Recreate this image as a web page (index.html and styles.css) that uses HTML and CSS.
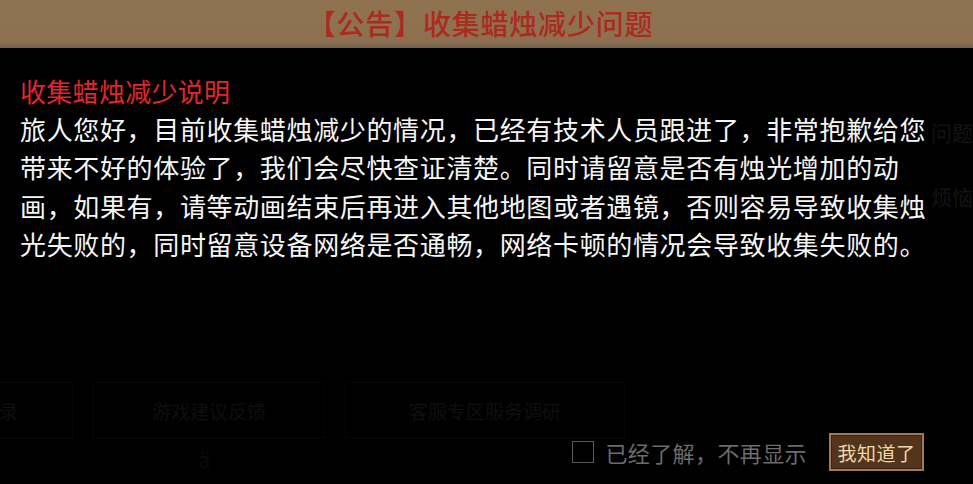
FILE: index.html
```html
<!DOCTYPE html>
<html lang="zh-CN">
<head>
<meta charset="utf-8">
<title>公告</title>
<link rel="stylesheet" href="styles.css">
</head>
<body>
<div class="ghost" aria-hidden="true">
  <div class="ghost-side ghost-side-1">问题</div>
  <div class="ghost-side ghost-side-2">烦恼</div>
  <div class="ghost-row">
    <div class="ghost-box ghost-box-a">录</div>
    <div class="ghost-box ghost-box-b">游戏建议反馈</div>
    <div class="ghost-box ghost-box-c">客服专区服务调研</div>
  </div>
  <div class="ghost-mark">ä</div>
</div>
<div class="page">
  <header class="header">
    <h1 class="title">【公告】收集蜡烛减少问题</h1>
  </header>
  <main class="content">
    <h2 class="subtitle">收集蜡烛减少说明</h2>
    <p class="body-text">旅人您好，目前收集蜡烛减少的情况，已经有技术人员跟进了，非常抱歉给您<br>带来不好的体验了，我们会尽快查证清楚。同时请留意是否有烛光增加的动<br>画，如果有，请等动画结束后再进入其他地图或者遇镜，否则容易导致收集烛<br>光失败的，同时留意设备网络是否通畅，网络卡顿的情况会导致收集失败的。</p>
  </main>
  <footer class="footer">
    <label class="dismiss">
      <span class="checkbox"></span>
      <span class="dismiss-text">已经了解，不再显示</span>
    </label>
    <button class="ok-btn" type="button">我知道了</button>
  </footer>
</div>
</body>
</html>
```
FILE: styles.css
```css
html, body {
  margin: 0;
  padding: 0;
  height: 100%;
}
body {
  background: #000;
  font-family: "Noto Sans CJK SC", "Noto Sans", sans-serif;
  color: #fff;
  overflow: hidden;
  position: relative;
}
.page {
  position: relative;
  z-index: 1;
  height: 484px;
  display: flex;
  flex-direction: column;
}
.header {
  height: 48px;
  flex: 0 0 48px;
  background: linear-gradient(#8f7351, #8c7050 88%, #6f604f);
  display: flex;
  align-items: center;
  justify-content: center;
}
.title {
  margin: 0;
  font-size: 28px;
  font-weight: 500;
  color: #ad2a21;
  line-height: 1;
  letter-spacing: 0.8px;
  padding: 0 12px 2px 0;
}
.content {
  padding: 24px 0 0 20px;
}
.subtitle {
  margin: 0;
  font-size: 26px;
  font-weight: 400;
  color: #e3262b;
  line-height: 38px;
  letter-spacing: 0.3px;
}
.body-text {
  margin: 0;
  font-size: 26px;
  line-height: 38.4px;
  letter-spacing: 0.65px;
  color: #f6f6f6;
  white-space: nowrap;
}
.footer {
  margin-top: auto;
  display: flex;
  align-items: center;
  justify-content: flex-end;
  padding: 0 49px 13px 0;
  height: 38px;
}
.dismiss {
  display: flex;
  align-items: center;
  gap: 11px;
  margin-right: 22px;
}
.checkbox {
  width: 20px;
  height: 20px;
  border: 1.5px solid #5a5a5a;
  box-sizing: content-box;
}
.dismiss-text {
  font-size: 22px;
  color: #6c6c6c;
  letter-spacing: 0.4px;
  line-height: 1;
}
.ok-btn {
  width: 95px;
  height: 38px;
  box-sizing: border-box;
  background: #53351f;
  border: 2px solid #9f7b5a;
  box-shadow: inset 0 0 0 1px #3a2414;
  color: #efd8a8;
  font-family: "Noto Sans CJK SC", sans-serif;
  font-size: 19px;
  letter-spacing: 0.5px;
  padding: 0;
  line-height: 1;
}
.ghost {
  position: absolute;
  inset: 0;
  z-index: 0;
  color: #0f0f0f;
}
.ghost-side {
  position: absolute;
  right: 0;
  font-size: 21px;
  color: #141414;
}
.ghost-side-1 { top: 117px; }
.ghost-side-2 { top: 181px; }
.ghost-row {
  position: absolute;
  left: -2px;
  top: 382px;
  display: flex;
  gap: 20px;
}
.ghost-box {
  height: 56px;
  box-sizing: border-box;
  border: 1px solid #070707;
  display: flex;
  align-items: center;
  justify-content: center;
  font-size: 19px;
}
.ghost-box-a { width: 75px; justify-content: flex-start; }
.ghost-box-b { width: 232px; }
.ghost-box-c { width: 280px; }
.ghost-mark {
  position: absolute;
  left: 198px;
  top: 442px;
  font-size: 22px;
  color: #0b0b0b;
}
```
